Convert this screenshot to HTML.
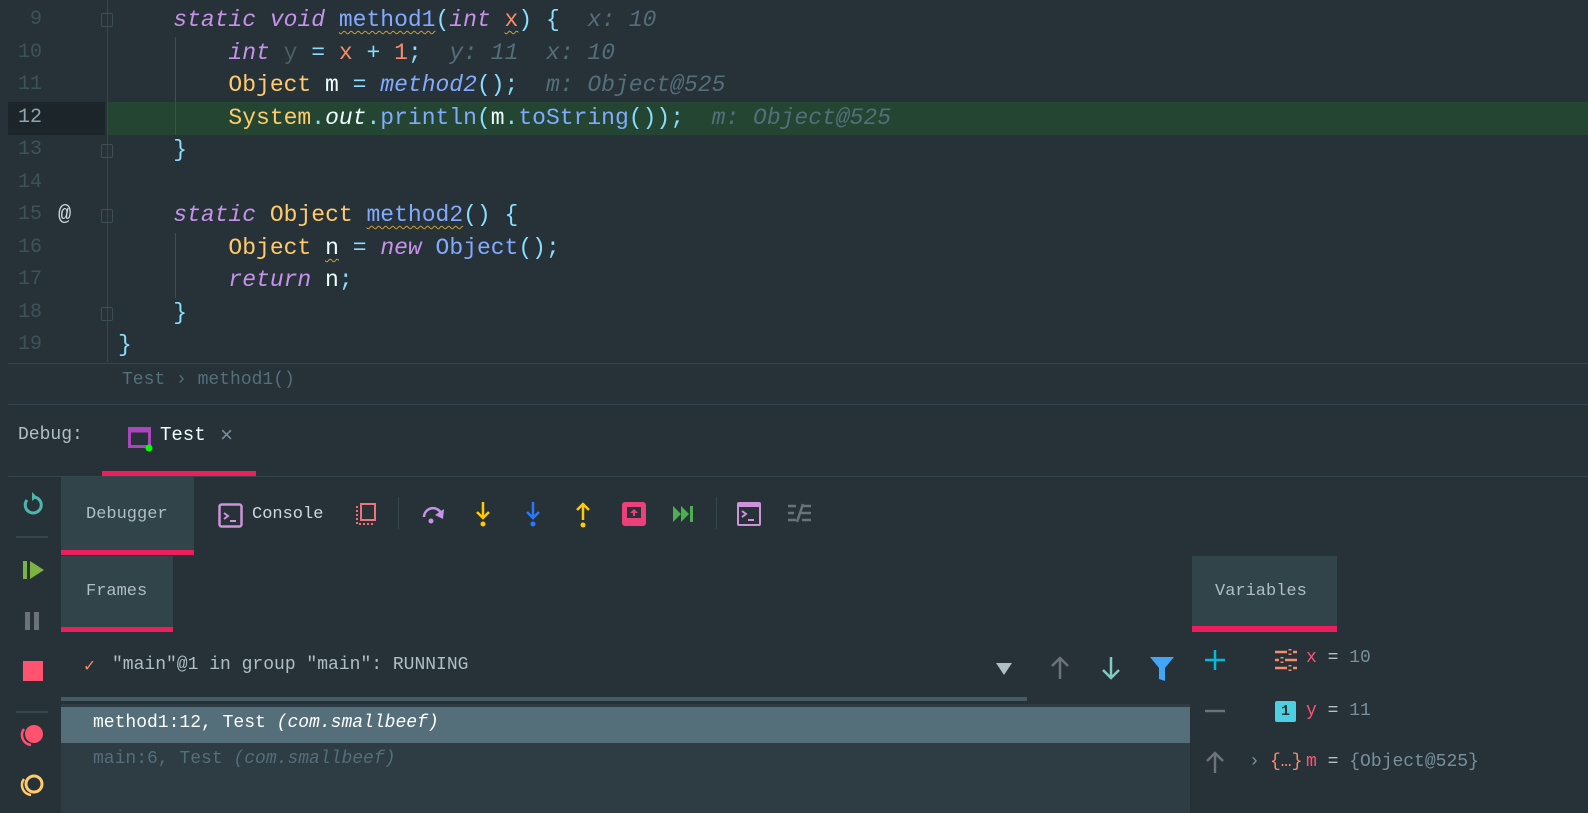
<!DOCTYPE html>
<html><head><meta charset="utf-8"><style>
*{margin:0;padding:0;box-sizing:border-box}
body{width:1588px;height:813px;background:#263238;overflow:hidden;position:relative;font-family:"Liberation Mono",monospace;color:#eeffff}
.a{position:absolute}
.ln{position:absolute;left:0;width:42px;text-align:right;font-size:20px;color:#3f525a;height:32px;line-height:32px}
.cl{position:absolute;left:118px;font-size:23px;height:32px;line-height:32px;white-space:pre}
.k{color:#c792ea;font-style:italic}.t{color:#ffcb6b}.m{color:#82aaff}.p{color:#89ddff}.n{color:#f78c6c}
.h{color:#546e7a;font-style:italic}.mi{color:#82aaff;font-style:italic}.g{color:#4b5d65}
.w{text-decoration:underline wavy #c9a23a;text-underline-offset:4px;text-decoration-thickness:1px}
.fold{position:absolute;left:101px;width:12px;height:14px;border:1.5px solid #3c4e56;border-radius:2px}
.ui{font-size:18px;color:#b0bec5}
</style></head><body>
<!-- gutter line -->
<div class="a" style="left:107px;top:0;width:1px;height:362px;background:#37474f"></div>
<div class="a" style="left:8px;top:102px;width:97px;height:33px;background:#1c252a"></div>
<div class="a" style="left:108px;top:102px;width:1480px;height:33px;background:#234532"></div>
<div class="a" style="left:175px;top:37px;width:1px;height:98px;background:#3c4e56"></div>
<div class="a" style="left:175px;top:233px;width:1px;height:65px;background:#3c4e56"></div>
<div class="fold" style="top:13px"></div><div class="fold" style="top:144px"></div>
<div class="fold" style="top:209px"></div><div class="fold" style="top:307px"></div>

<div class="ln" style="top:4px">9</div><div class="ln" style="top:37px">10</div><div class="ln" style="top:69px">11</div>
<div class="ln" style="top:102px;color:#90a4ae">12</div><div class="ln" style="top:134px">13</div><div class="ln" style="top:167px">14</div>
<div class="ln" style="top:199px">15</div><div class="ln" style="top:232px">16</div><div class="ln" style="top:264px">17</div>
<div class="ln" style="top:297px">18</div><div class="ln" style="top:329px">19</div>
<div class="a" style="left:58px;top:199px;font-size:22px;line-height:32px;color:#cfd8dc">@</div>

<div class="cl" style="top:4px">    <span class="k">static void</span> <span class="m w">method1</span><span class="p">(</span><span class="k">int</span> <span class="n w">x</span><span class="p">)</span> <span class="p">{</span>  <span class="h">x: 10</span></div>
<div class="cl" style="top:37px">        <span class="k">int</span> <span class="g">y</span> <span class="p">=</span> <span class="n">x</span> <span class="p">+</span> <span class="n">1</span><span class="p">;</span>  <span class="h">y: 11  x: 10</span></div>
<div class="cl" style="top:69px">        <span class="t">Object</span> m <span class="p">=</span> <span class="mi">method2</span><span class="p">();</span>  <span class="h">m: Object@525</span></div>
<div class="cl" style="top:102px">        <span class="t">System</span><span class="p">.</span><i>out</i><span class="p">.</span><span class="m">println</span><span class="p">(</span>m<span class="p">.</span><span class="m">toString</span><span class="p">());</span>  <span class="h">m: Object@525</span></div>
<div class="cl" style="top:134px">    <span class="p">}</span></div>
<div class="cl" style="top:199px">    <span class="k">static</span> <span class="t">Object</span> <span class="m w">method2</span><span class="p">()</span> <span class="p">{</span></div>
<div class="cl" style="top:232px">        <span class="t">Object</span> <span class="w">n</span> <span class="p">=</span> <span class="k">new</span> <span class="m">Object</span><span class="p">();</span></div>
<div class="cl" style="top:264px">        <span class="k">return</span> n<span class="p">;</span></div>
<div class="cl" style="top:297px">    <span class="p">}</span></div>
<div class="cl" style="top:329px"><span class="p">}</span></div>

<div class="a" style="left:8px;top:363px;width:1580px;height:1px;background:#37474f"></div>
<div class="a" style="left:122px;top:368px;font-size:18px;line-height:24px;color:#546e7a">Test › method1()</div>
<div class="a" style="left:8px;top:404px;width:1580px;height:1px;background:#37474f"></div>

<div class="a ui" style="left:18px;top:425px">Debug:</div>
<svg class="a" style="left:128px;top:427px" width="26" height="26"><rect x="1.5" y="1.5" width="20" height="18" fill="none" stroke="#ab47bc" stroke-width="3"/><rect x="1.5" y="1.5" width="20" height="4" fill="#ab47bc"/><circle cx="21" cy="21" r="3.5" fill="#0f0"/></svg>
<div class="a" style="left:160px;top:424px;font-size:19px;color:#eeffff">Test</div>
<div class="a" style="left:220px;top:424px;font-size:22px;color:#78909c">×</div>
<div class="a" style="left:102px;top:471px;width:154px;height:5px;background:#ec1e5e"></div>
<div class="a" style="left:8px;top:476px;width:1580px;height:1px;background:#37474f"></div>

<!-- left strip -->
<div class="a" style="left:61px;top:477px;width:1527px;height:336px;background:#263238"></div>
<svg class="a" style="left:20px;top:492px" width="26" height="26"><path d="M7 8 A8 8 0 1 0 13 5" fill="none" stroke="#4db6ac" stroke-width="3"/><path d="M12 0 L17 5 L12 9Z" fill="#4db6ac"/></svg>
<div class="a" style="left:16px;top:536px;width:32px;height:2px;background:#37474f"></div>
<svg class="a" style="left:22px;top:559px" width="24" height="24"><rect x="1" y="2" width="4" height="18" fill="#7cb342"/><path d="M8 2 L22 11 L8 20Z" fill="#7cb342"/></svg>
<svg class="a" style="left:24px;top:611px" width="18" height="20"><rect x="1" y="1" width="5" height="18" fill="#6b7378"/><rect x="10" y="1" width="5" height="18" fill="#6b7378"/></svg>
<div class="a" style="left:23px;top:661px;width:20px;height:20px;background:#ff5370"></div>
<div class="a" style="left:16px;top:711px;width:32px;height:2px;background:#37474f"></div>
<svg class="a" style="left:19px;top:721px" width="28" height="28"><circle cx="15" cy="13" r="9" fill="#ff5370"/><path d="M5 8 A10 10 0 0 0 12 24" fill="none" stroke="#ff5370" stroke-width="2.5"/></svg>
<svg class="a" style="left:19px;top:771px" width="28" height="28"><circle cx="15" cy="13" r="8" fill="none" stroke="#ffcb6b" stroke-width="3"/><path d="M5 8 A10 10 0 0 0 12 24" fill="none" stroke="#ffcb6b" stroke-width="2.5"/></svg>

<!-- toolbar -->
<div class="a" style="left:61px;top:477px;width:133px;height:78px;background:#31444a"></div>
<div class="a" style="left:61px;top:550px;width:133px;height:5px;background:#ec1e5e"></div>
<div class="a ui" style="left:86px;top:505px;font-size:17px">Debugger</div>
<svg class="a" style="left:218px;top:503px" width="26" height="26"><rect x="1.5" y="1.5" width="22" height="22" rx="2" fill="none" stroke="#ce93d8" stroke-width="2.5"/><path d="M6 10 L10 13 L6 16 M12 18 H18" fill="none" stroke="#ce93d8" stroke-width="2"/></svg>
<div class="a ui" style="left:252px;top:505px;font-size:17px;color:#cfd8dc">Console</div>
<svg class="a" style="left:354px;top:502px" width="26" height="26"><rect x="7" y="2" width="14" height="16" fill="none" stroke="#f07178" stroke-width="2"/><path d="M3 4 V22 H19" fill="none" stroke="#f07178" stroke-width="2" stroke-dasharray="2 2"/></svg>
<div class="a" style="left:398px;top:497px;width:1px;height:32px;background:#37474f"></div>
<svg class="a" style="left:420px;top:503px" width="28" height="24"><path d="M4 14 A9 9 0 0 1 21 10" fill="none" stroke="#c792ea" stroke-width="2.5"/><path d="M24 6 L23 16 L15 12Z" fill="#c792ea"/><circle cx="11" cy="18" r="2.5" fill="#c792ea"/></svg>
<svg class="a" style="left:472px;top:500px" width="22" height="28"><path d="M11 2 V18 M5 12 L11 18 L17 12" fill="none" stroke="#ffcb00" stroke-width="2.5"/><circle cx="11" cy="24" r="2.5" fill="#ffcb00"/></svg>
<svg class="a" style="left:522px;top:500px" width="22" height="28"><path d="M11 2 V18 M5 12 L11 18 L17 12" fill="none" stroke="#2979ff" stroke-width="2.5"/><circle cx="11" cy="24" r="2.5" fill="#2979ff"/></svg>
<svg class="a" style="left:572px;top:500px" width="22" height="28"><path d="M11 20 V4 M5 10 L11 4 L17 10" fill="none" stroke="#ffcb00" stroke-width="2.5"/><circle cx="11" cy="25" r="2.5" fill="#ffcb00"/></svg>
<svg class="a" style="left:621px;top:501px" width="26" height="26"><rect x="1" y="1" width="24" height="24" rx="3" fill="#ec407a"/><rect x="6" y="6" width="14" height="11" fill="#263238"/><path d="M13 8 L17 12 H14 V15 H12 V12 H9Z" fill="#ec407a"/></svg>
<svg class="a" style="left:672px;top:504px" width="24" height="20"><path d="M1 2 L9 10 L1 18Z M9 2 L17 10 L9 18Z" fill="#4caf50"/><rect x="18" y="2" width="3" height="16" fill="#4caf50"/></svg>
<div class="a" style="left:716px;top:497px;width:1px;height:32px;background:#37474f"></div>
<svg class="a" style="left:736px;top:501px" width="26" height="26"><rect x="1" y="1" width="24" height="24" rx="2" fill="#ce93d8"/><rect x="3" y="6" width="20" height="17" fill="#263238"/><path d="M6 10 L10 13 L6 16 M12 19 H18" fill="none" stroke="#ce93d8" stroke-width="2"/></svg>
<svg class="a" style="left:787px;top:503px" width="26" height="22"><path d="M1 3 H9 M15 3 H24 M1 10 H7 M14 10 H24 M1 17 H9 M15 17 H24 M16 1 L10 19" stroke="#6b7378" stroke-width="2.5" fill="none"/></svg>

<!-- frames -->
<div class="a" style="left:61px;top:556px;width:112px;height:76px;background:#31444a"></div>
<div class="a" style="left:61px;top:627px;width:112px;height:5px;background:#ec1e5e"></div>
<div class="a ui" style="left:86px;top:582px;font-size:17px">Frames</div>
<div class="a" style="left:84px;top:655px;font-size:18px;color:#f78c6c">✓</div>
<div class="a" style="left:112px;top:655px;font-size:18px;color:#b0bec5">"main"@1 in group "main": RUNNING</div>
<svg class="a" style="left:995px;top:662px" width="18" height="14"><path d="M1 1 H17 L9 13Z" fill="#b0bec5"/></svg>
<svg class="a" style="left:1048px;top:655px" width="24" height="26"><path d="M12 24 V3 M4 11 L12 3 L20 11" fill="none" stroke="#6b7378" stroke-width="2.5"/></svg>
<svg class="a" style="left:1099px;top:655px" width="24" height="26"><path d="M12 2 V23 M4 15 L12 23 L20 15" fill="none" stroke="#80cbc4" stroke-width="2.5"/></svg>
<svg class="a" style="left:1149px;top:655px" width="26" height="28"><path d="M1 2 H25 L16 13 V26 L10 24 V13Z" fill="#42a5f5"/></svg>
<div class="a" style="left:61px;top:697px;width:966px;height:4px;background:#455a64"></div>
<div class="a" style="left:61px;top:704px;width:1129px;height:109px;background:#2e3c43"></div>
<div class="a" style="left:61px;top:707px;width:1129px;height:36px;background:#546e7a"></div>
<div class="a" style="left:93px;top:713px;font-size:18px;color:#ffffff">method1:12, Test <i>(com.smallbeef)</i></div>
<div class="a" style="left:93px;top:749px;font-size:18px;color:#546e7a">main:6, Test <i>(com.smallbeef)</i></div>

<!-- variables -->
<div class="a" style="left:1192px;top:556px;width:145px;height:76px;background:#31444a"></div>
<div class="a" style="left:1192px;top:626px;width:145px;height:6px;background:#ec1e5e"></div>
<div class="a ui" style="left:1215px;top:582px;font-size:17px">Variables</div>
<svg class="a" style="left:1204px;top:649px" width="22" height="22"><path d="M11 1 V21 M1 11 H21" stroke="#00bcd4" stroke-width="2.5"/></svg>
<svg class="a" style="left:1204px;top:700px" width="22" height="22"><path d="M1 11 H21" stroke="#6b7378" stroke-width="2.5"/></svg>
<svg class="a" style="left:1204px;top:750px" width="22" height="24"><path d="M11 23 V3 M3 11 L11 3 L19 11" fill="none" stroke="#6b7378" stroke-width="2.5"/></svg>
<svg class="a" style="left:1274px;top:648px" width="24" height="24"><path d="M1 4 H23 M1 12 H23 M1 20 H23" stroke="#f78c6c" stroke-width="2.5"/><path d="M16 1 V7 M8 9 V15 M16 17 V23" stroke="#f78c6c" stroke-width="3"/><path d="M13 4 H19 M5 12 H11 M13 20 H19" stroke="#263238" stroke-width="3"/></svg>
<div class="a" style="left:1306px;top:648px;font-size:18px;color:#ff5370">x <span style="color:#b0bec5">=</span> <span style="color:#78909c">10</span></div>
<div class="a" style="left:1275px;top:701px;width:21px;height:21px;border-radius:2px;background:#4dd0e1;color:#263238;font-size:15px;text-align:center;line-height:21px;font-weight:bold">1</div>
<div class="a" style="left:1306px;top:701px;font-size:18px;color:#ff5370">y <span style="color:#b0bec5">=</span> <span style="color:#78909c">11</span></div>
<div class="a" style="left:1249px;top:752px;font-size:18px;color:#78909c">›</div>
<div class="a" style="left:1270px;top:752px;font-size:18px;color:#f78c6c">{…}</div>
<div class="a" style="left:1306px;top:752px;font-size:18px;color:#ff5370">m <span style="color:#b0bec5">=</span> <span style="color:#78909c">{Object@525}</span></div>
</body></html>
